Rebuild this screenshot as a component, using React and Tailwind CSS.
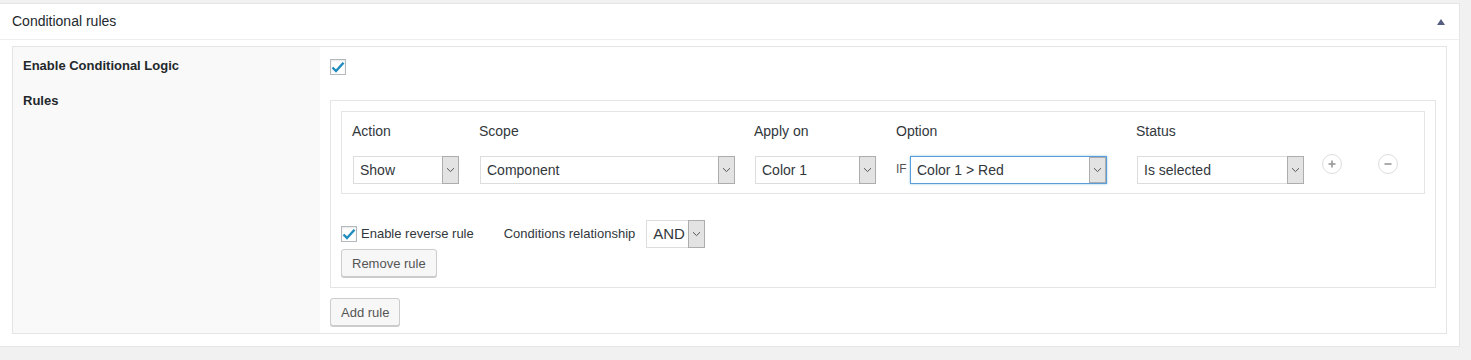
const FONT = { fontFamily: '"Liberation Sans", Arial, sans-serif' };

function Chevron() {
  return (
    <svg width="9" height="6" viewBox="0 0 9 6" fill="none">
      <path d="M1 1.2 L4.5 4.6 L8 1.2" stroke="#555" strokeWidth="1" />
    </svg>
  );
}

function Select({ value, width, focused = false, big = false }) {
  return (
    <div
      className={`flex h-[28px] bg-white ${focused ? 'border border-[#5b9dd9] shadow-[0_0_2px_rgba(30,140,190,0.5)]' : ''}`}
      style={{ width }}
    >
      <div
        className={`flex-1 flex items-center pl-[6px] text-[#32373c] ${big ? 'text-[15px]' : 'text-[14px]'} ${
          focused ? '' : 'border-y border-l border-[#ddd]'
        }`}
      >
        {value}
      </div>
      <div className="w-[17px] h-full flex items-center justify-center bg-[#e3e3e3] border border-[#adadad]">
        <Chevron />
      </div>
    </div>
  );
}

function Checkbox() {
  return (
    <div className="w-[16px] h-[16px] border border-[#b4b9be] bg-white shadow-[inset_0_1px_2px_rgba(0,0,0,0.1)] flex items-center justify-center">
      <svg width="14" height="12" viewBox="0 0 14 12">
        <path d="M1.5 6.5 L5 10 L12.5 1.8" stroke="#1e8cbe" strokeWidth="2.4" fill="none" />
      </svg>
    </div>
  );
}

function Button({ children }) {
  return (
    <button className="h-[28px] px-[10px] bg-[#f7f7f7] border border-[#ccc] rounded-[3px] shadow-[0_1px_0_#ccc] text-[13px] text-[#555] leading-none">
      {children}
    </button>
  );
}

function RoundIcon({ minus = false }) {
  return (
    <div className="w-[20px] h-[20px] rounded-full border border-[#ddd] bg-white flex items-center justify-center">
      <svg width="10" height="10" viewBox="0 0 10 10">
        <path d="M1.5 5 H8.5" stroke="#999" strokeWidth="1.6" />
        {!minus && <path d="M5 1.5 V8.5" stroke="#999" strokeWidth="1.6" />}
      </svg>
    </div>
  );
}

const COLUMNS = [
  { label: 'Action', width: 127, select: { value: 'Show', width: 106 } },
  { label: 'Scope', width: 275, select: { value: 'Component', width: 255 } },
  { label: 'Apply on', width: 142, select: { value: 'Color 1', width: 121 } },
];

export default function App() {
  return (
    <div className="min-h-[360px] bg-[#f1f1f1] pt-[3px]" style={FONT}>
      <div className="w-[1460px] bg-white border-y border-r border-[#e5e5e5]">
        {/* header */}
        <div className="h-[36px] flex items-center justify-between pl-[12px] pr-[14px] border-b border-[#eee]">
          <span className="text-[14px] text-[#23282d]">Conditional rules</span>
          <svg width="8" height="6" viewBox="0 0 8 6">
            <path d="M4 0 L8 6 H0 Z" fill="#555d80" />
          </svg>
        </div>

        <div className="pt-[6px] pb-[12px] pl-[12px] pr-[12px]">
          <div className="flex border border-[#e5e5e5]">
            {/* labels */}
            <div className="w-[307px] bg-[#f9f9f9] pl-[10px] pt-[9px] flex flex-col gap-[15px] text-[13px] font-bold text-[#23282d] leading-[20px]">
              <span>Enable Conditional Logic</span>
              <span>Rules</span>
            </div>

            {/* fields */}
            <div className="flex-1 pl-[10px] pr-[10px] pt-[12px] pb-[7px]">
              <Checkbox />

              <div className="mt-[25px] border border-[#e5e5e5] p-[10px]">
                <div className="border border-[#e5e5e5] pl-[10px] pt-[10px] pb-[9px] flex">
                  {COLUMNS.map((c) => (
                    <div key={c.label} className="flex flex-col" style={{ width: c.width }}>
                      <span className="h-[18px] text-[14px] leading-[18px] text-[#32373c]">{c.label}</span>
                      <div className="mt-[16px] ml-px">
                        <Select value={c.select.value} width={c.select.width} />
                      </div>
                    </div>
                  ))}

                  <div className="flex flex-col w-[240px]">
                    <span className="h-[18px] text-[14px] leading-[18px] text-[#32373c]">Option</span>
                    <div className="mt-[16px] flex items-center">
                      <span className="w-[14px] text-[12px] text-[#555] -mt-[2px]">IF</span>
                      <Select value="Color 1 > Red" width={197} focused />
                    </div>
                  </div>

                  <div className="flex flex-col w-[186px]">
                    <span className="h-[18px] text-[14px] leading-[18px] text-[#32373c]">Status</span>
                    <div className="mt-[16px] ml-px">
                      <Select value="Is selected" width={167} />
                    </div>
                  </div>

                  <div className="pt-[32px] flex gap-[36px]">
                    <RoundIcon />
                    <RoundIcon minus />
                  </div>
                </div>

                <div className="mt-[26px] h-[28px] flex items-center text-[13px] text-[#32373c]">
                  <Checkbox />
                  <span className="ml-[4px]">Enable reverse rule</span>
                  <span className="ml-[30px]">Conditions relationship</span>
                  <div className="ml-[11px]">
                    <Select value="AND" width={59} big />
                  </div>
                </div>

                <div className="mt-[1px]">
                  <Button>Remove rule</Button>
                </div>
              </div>

              <div className="mt-[10px]">
                <Button>Add rule</Button>
              </div>
            </div>
          </div>
        </div>
      </div>
    </div>
  );
}
